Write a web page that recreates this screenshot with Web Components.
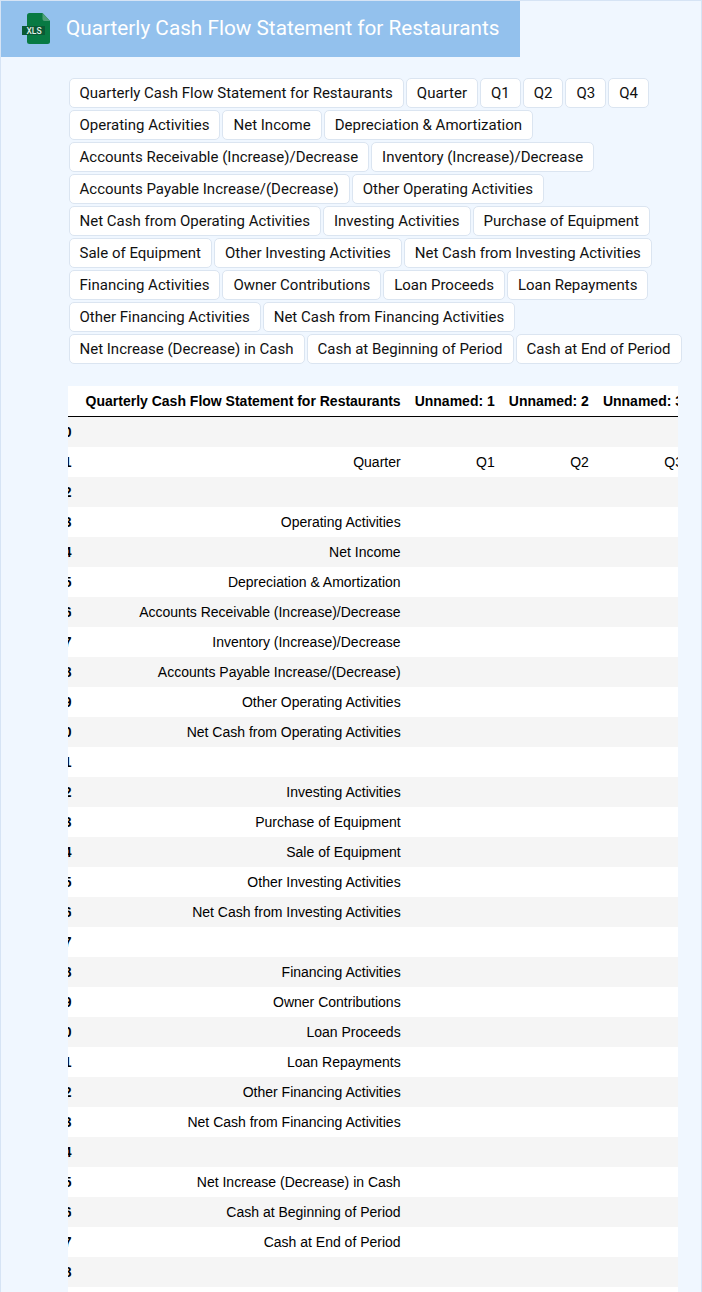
<!DOCTYPE html>
<html lang="en">
<head>
<meta charset="utf-8">
<title>Quarterly Cash Flow Statement for Restaurants</title>
<style>
html,body{margin:0;padding:0;height:1292px;overflow:hidden;background:#f0f7ff}
</style>
</head>
<body>
<app-page></app-page>
<script>
const ROWS=["","Quarter","","Operating Activities","Net Income","Depreciation & Amortization","Accounts Receivable (Increase)/Decrease","Inventory (Increase)/Decrease","Accounts Payable Increase/(Decrease)","Other Operating Activities","Net Cash from Operating Activities","","Investing Activities","Purchase of Equipment","Sale of Equipment","Other Investing Activities","Net Cash from Investing Activities","","Financing Activities","Owner Contributions","Loan Proceeds","Loan Repayments","Other Financing Activities","Net Cash from Financing Activities","","Net Increase (Decrease) in Cash","Cash at Beginning of Period","Cash at End of Period","",""];
const CHIPS=["Quarterly Cash Flow Statement for Restaurants","Quarter","Q1","Q2","Q3","Q4"].concat(ROWS.filter((r,i)=>r&&r!=="Quarter"));
const esc=s=>s.replace(/&/g,"&amp;");

class AppHeader extends HTMLElement{
  constructor(){super();this.attachShadow({mode:"open"}).innerHTML=`<style>
  :host{display:flex;align-items:center;width:519px;height:56px;background:#93c1ed;color:#fff;box-sizing:border-box;padding-left:21px;gap:14px}
  svg{flex:none;display:block}
  h1{margin:-2px 0 0;font:400 20.75px/24px Roboto,sans-serif;white-space:nowrap}
  </style>
  <svg width="30" height="32" viewBox="0 0 30 32" aria-hidden="true">
    <path d="M7.5 0H20.5L28 8V28.5Q28 31 25.5 31H7.5Q5 31 5 28.5V2.5Q5 0 7.5 0Z" fill="#087a43"/>
    <path d="M20.5 0L28 8H22.5Q20.5 8 20.5 6Z" fill="#4f9f79"/>
    <rect x="0" y="13" width="23" height="9" fill="#0a5a35"/>
    <text x="12" y="20.7" text-anchor="middle" font-family="Roboto,sans-serif" font-size="8.5" font-weight="500" fill="#e3efe8">XLS</text>
  </svg><h1><slot></slot></h1>`;}
}
customElements.define("app-header",AppHeader);

class TagChip extends HTMLElement{
  constructor(){super();this.attachShadow({mode:"open"}).innerHTML=`<style>
  :host{display:block;box-sizing:border-box;height:30px;padding:0 10px;background:#fff;border:1px solid #dbe5f1;border-radius:5px;font:400 15px/28px Roboto,sans-serif;color:#111;white-space:nowrap}
  </style><slot></slot>`;}
}
customElements.define("tag-chip",TagChip);

class ChipList extends HTMLElement{
  constructor(){super();this.attachShadow({mode:"open"}).innerHTML=`<style>
  :host{display:flex;flex-wrap:wrap;gap:2px;box-sizing:border-box}
  </style><slot></slot>`;}
}
customElements.define("chip-list",ChipList);

class DataTable extends HTMLElement{
  constructor(){super();
    const body=ROWS.map((r,i)=>`<tr><th>${i}</th><td>${esc(r)}</td><td>${r==="Quarter"?"Q1":""}</td><td>${r==="Quarter"?"Q2":""}</td><td>${r==="Quarter"?"Q3":""}</td><td>${r==="Quarter"?"Q4":""}</td></tr>`).join("");
    this.attachShadow({mode:"open"}).innerHTML=`<style>
    :host{display:block;width:610px;overflow:hidden;background:#fff}
    table{border-collapse:collapse;margin-left:-19px;font:14px/16px "Liberation Sans",Arial,sans-serif;color:#000;background:#fff}
    th,td{padding:7px;text-align:right;white-space:nowrap;height:16px}
    th{font-weight:700}
    thead th{border-bottom:1px solid #000}
    tbody tr:nth-child(odd){background:#f5f5f5}
    </style>
    <table><thead><tr><th></th><th>Quarterly Cash Flow Statement for Restaurants</th><th>Unnamed: 1</th><th>Unnamed: 2</th><th>Unnamed: 3</th><th>Unnamed: 4</th></tr></thead><tbody>${body}</tbody></table>`;}
}
customElements.define("data-table",DataTable);

class AppPage extends HTMLElement{
  constructor(){super();
    const chips=CHIPS.map(c=>`<tag-chip>${esc(c)}</tag-chip>`).join("");
    this.attachShadow({mode:"open"}).innerHTML=`<style>
    :host{display:block;box-sizing:border-box;height:1292px;overflow:hidden;background:#f0f7ff;border:1px solid #d6e4f5;border-bottom:0}
    main{display:flex;flex-direction:column;padding:21px 0 0 67px;gap:22px}
    chip-list{margin:0 12px 0 .5px}
    </style>
    <app-header>Quarterly Cash Flow Statement for Restaurants</app-header>
    <main><chip-list>${chips}</chip-list><data-table></data-table></main>`;}
}
customElements.define("app-page",AppPage);
</script>
</body>
</html>
